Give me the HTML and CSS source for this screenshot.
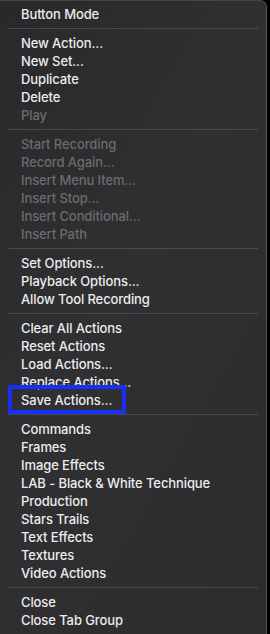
FILE: index.html
```html
<!DOCTYPE html>
<html>
<head>
<meta charset="utf-8">
<link rel="stylesheet" href="styles.css">
</head>
<body>
<div class="menu">
  <div class="item">Button Mode</div>
  <div class="sep"></div>
  <div class="item">New Action...</div>
  <div class="item">New Set...</div>
  <div class="item">Duplicate</div>
  <div class="item">Delete</div>
  <div class="item off">Play</div>
  <div class="sep"></div>
  <div class="item off">Start Recording</div>
  <div class="item off">Record Again...</div>
  <div class="item off">Insert Menu Item...</div>
  <div class="item off">Insert Stop...</div>
  <div class="item off">Insert Conditional...</div>
  <div class="item off">Insert Path</div>
  <div class="sep"></div>
  <div class="item">Set Options...</div>
  <div class="item">Playback Options...</div>
  <div class="item">Allow Tool Recording</div>
  <div class="sep"></div>
  <div class="item">Clear All Actions</div>
  <div class="item">Reset Actions</div>
  <div class="item">Load Actions...</div>
  <div class="item">Replace Actions...</div>
  <div class="item marked">Save Actions...</div>
  <div class="sep"></div>
  <div class="item">Commands</div>
  <div class="item">Frames</div>
  <div class="item">Image Effects</div>
  <div class="item">LAB - Black &amp; White Technique</div>
  <div class="item">Production</div>
  <div class="item">Stars Trails</div>
  <div class="item">Text Effects</div>
  <div class="item">Textures</div>
  <div class="item">Video Actions</div>
  <div class="sep"></div>
  <div class="item">Close</div>
  <div class="item">Close Tab Group</div>
</div>
</body>
</html>
```
FILE: styles.css
```css
html, body {
  margin: 0;
  padding: 0;
  background: #000;
}
.menu {
  box-sizing: border-box;
  width: 267px;
  height: 634px;
  padding-top: 4px;
  background: linear-gradient(120deg, #29282b 0%, #302f32 45%, #2c2b2e 100%);
  border-right: 1px solid #58575a;
  border-top: 1px solid #444346;
  border-top-right-radius: 7px;
  display: flex;
  flex-direction: column;
  font-family: Inter, "Liberation Sans", sans-serif;
  font-size: 13px;
  font-weight: 500;
  letter-spacing: -0.1px;
}
.item {
  position: relative;
  height: 18px;
  line-height: 18px;
  padding-left: 21px;
  color: #ececec;
  white-space: nowrap;
}
.item.off {
  color: #6c6b6e;
}
.sep {
  height: 11px;
  display: flex;
  align-items: center;
  padding: 0 8px;
}
.sep::before {
  content: "";
  width: 250px;
  height: 1px;
  flex: none;
  background: #4a494c;
}
.item.marked::after {
  content: "";
  position: absolute;
  left: 8px;
  top: -6px;
  width: 110px;
  height: 21px;
  border: 4px solid #1631f5;
  border-radius: 1px;
}
```
